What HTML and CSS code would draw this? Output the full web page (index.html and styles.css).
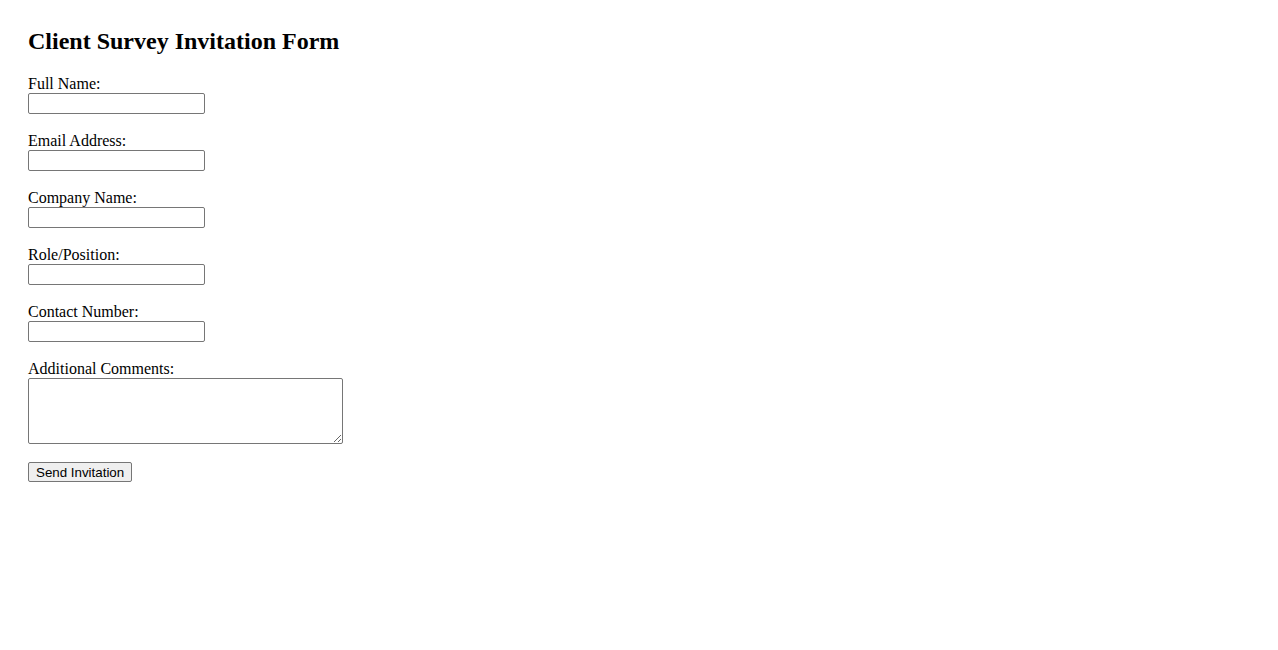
FILE: index.html
```html
<!DOCTYPE html>
<html lang="en">
<head>
    <meta charset="UTF-8">
    <meta name="viewport" content="width=device-width, initial-scale=1.0">
    <title>Client Survey Invitation Form</title>
    <link rel="stylesheet" href="styles.css">
</head>
<body>
    <div class="container">
        <h2>Client Survey Invitation Form</h2>
        <form id="surveyForm">
            <label for="fullName">Full Name:</label><br>
            <input type="text" id="fullName" name="fullName"><br><br>

            <label for="email">Email Address:</label><br>
            <input type="email" id="email" name="email"><br><br>

            <label for="company">Company Name:</label><br>
            <input type="text" id="company" name="company"><br><br>

            <label for="role">Role/Position:</label><br>
            <input type="text" id="role" name="role"><br><br>

            <label for="phone">Contact Number:</label><br>
            <input type="tel" id="phone" name="phone"><br><br>

            <label for="comments">Additional Comments:</label><br>
            <textarea id="comments" name="comments"></textarea><br><br>

            <button type="submit">Send Invitation</button>
        </form>
    </div>
</body>
</html>
```

FILE: styles.css
```css
body {
    margin: 8px;
    font-family: 'Liberation Serif', 'Times New Roman', serif;
    font-size: 16px;
    color: #000;
    background-color: #fff;
}

.container {
    padding: 20px;
}

h2 {
    font-size: 24px;
    margin: 0 0 20px 0;
}

input {
    width: 177px;
    height: 21px;
    box-sizing: border-box;
    font-family: 'Liberation Sans', Arial, sans-serif;
    font-size: 13px;
    border: 1px solid #767676;
    border-radius: 2px;
    padding: 1px 2px;
    vertical-align: top;
}

textarea {
    width: 315px;
    height: 66px;
    box-sizing: border-box;
    border: 1px solid #767676;
    border-radius: 2px;
    vertical-align: top;
}

button {
    font-family: 'Liberation Sans', Arial, sans-serif;
    font-size: 13.33px;
    height: 20px;
    padding: 1px 7px;
    border: 1px solid #767676;
    border-radius: 2px;
    background-color: #efefef;
    color: #000;
}
```
